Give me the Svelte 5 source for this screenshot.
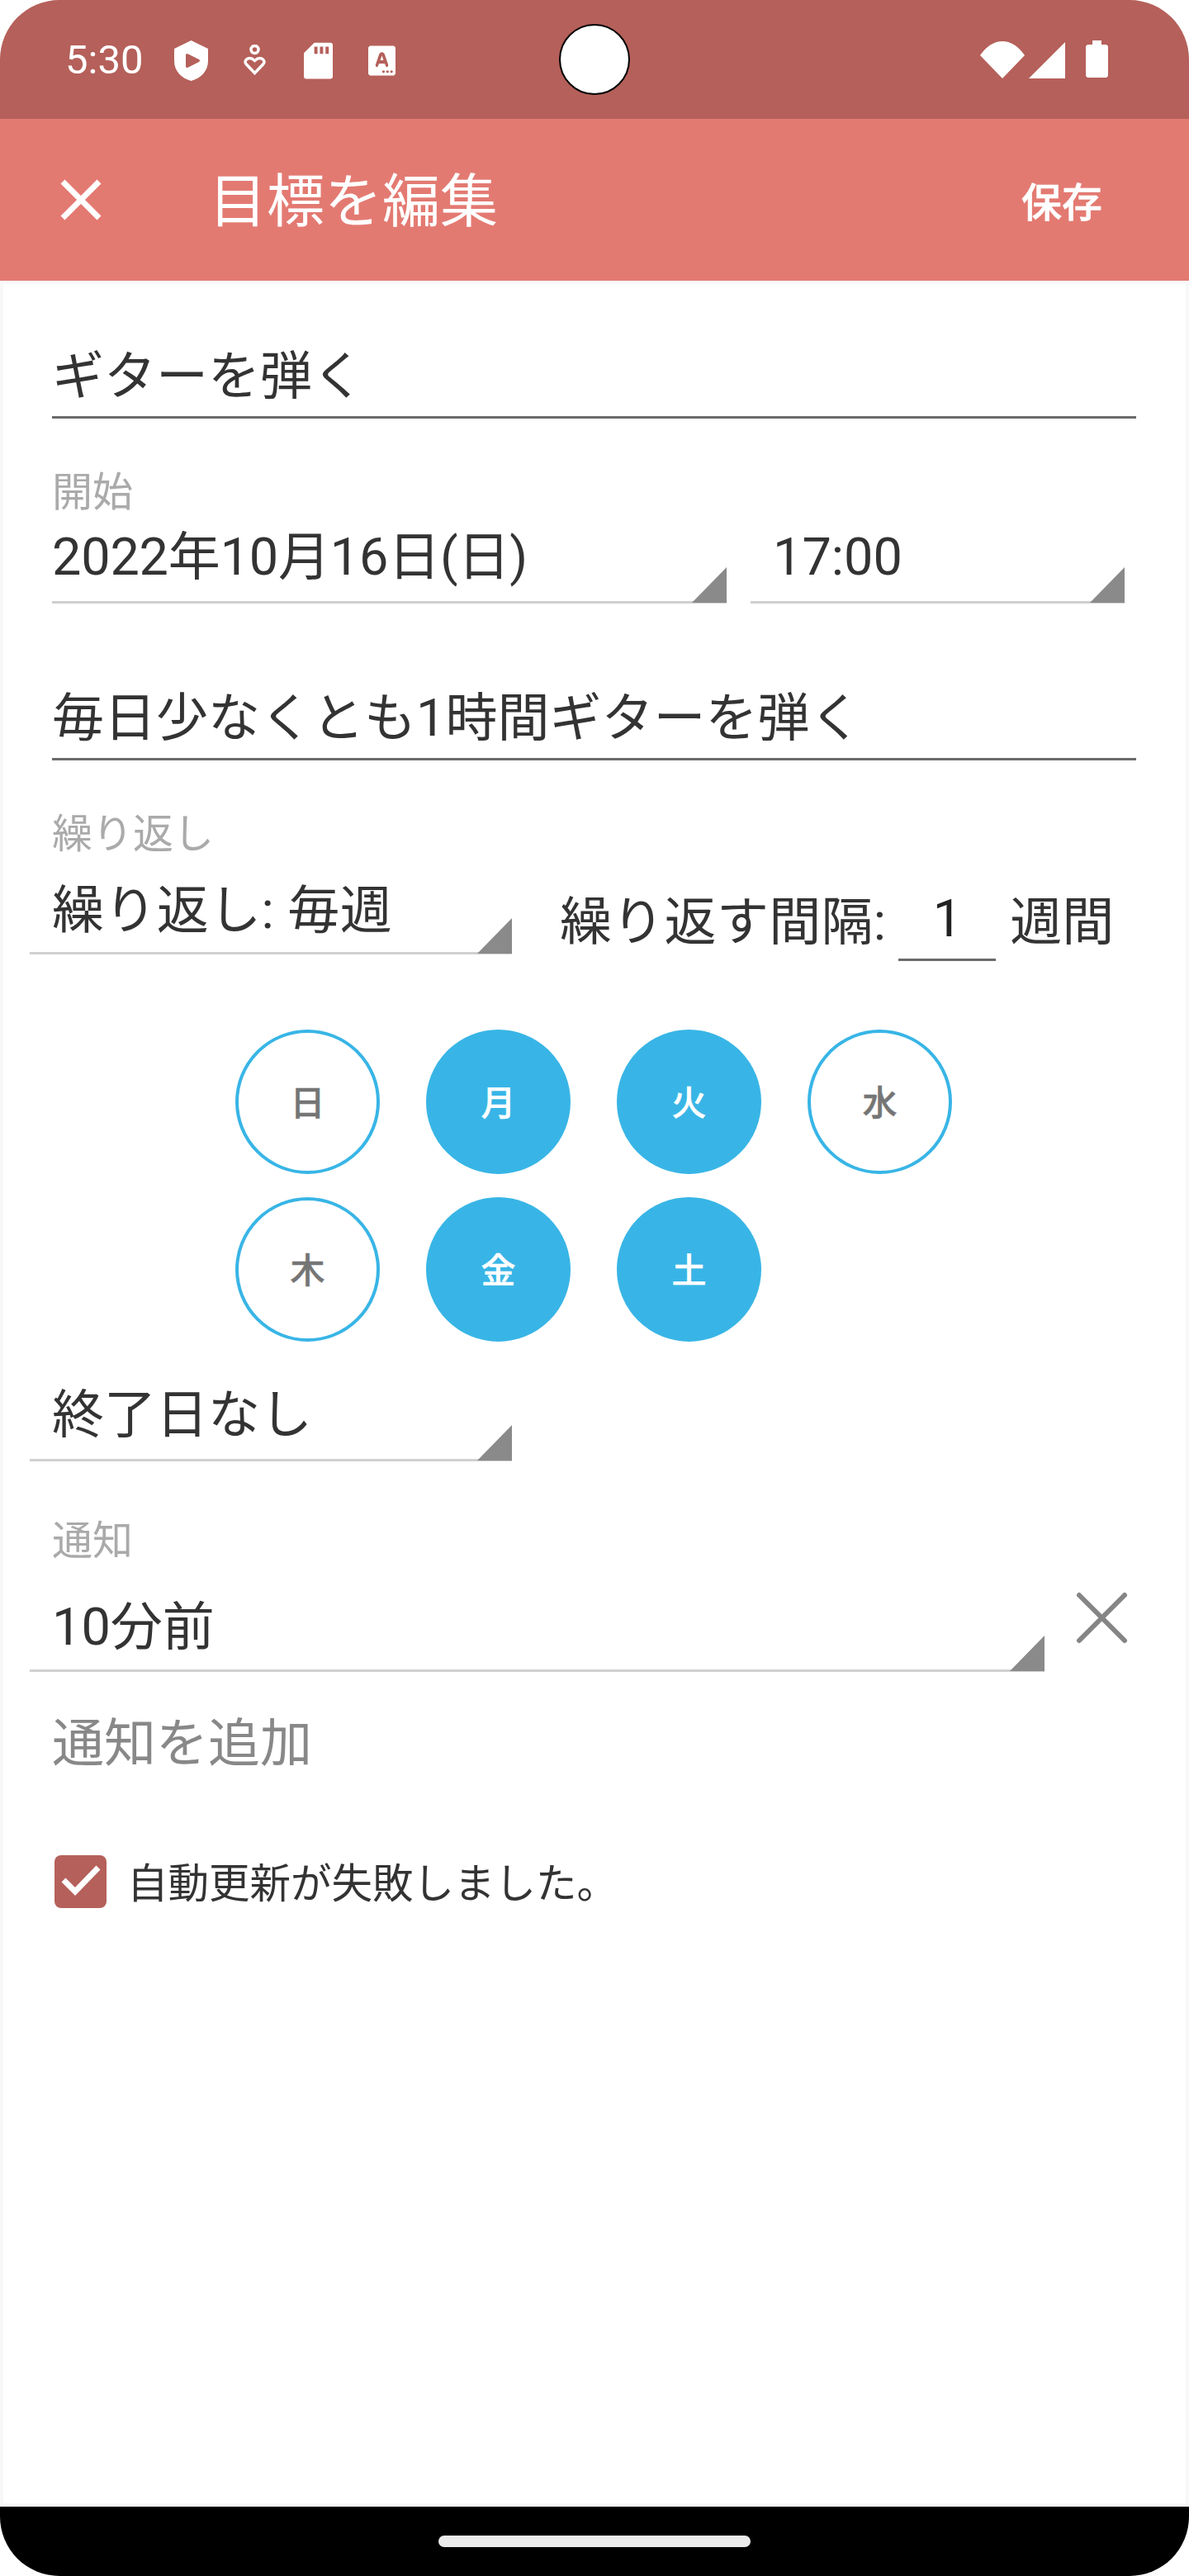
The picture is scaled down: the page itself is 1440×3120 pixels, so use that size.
<script>
  const days = [
    { t: '日', on: false }, { t: '月', on: true }, { t: '火', on: true }, { t: '水', on: false },
    { t: '木', on: false }, { t: '金', on: true }, { t: '土', on: true }
  ];
</script>

<div class="phone">
  <div class="status">
    <span class="time">5:30</span>
    <svg class="i-shield" viewBox="0 0 41 49"><path fill-rule="evenodd" d="M20.5 0L41 10V25C41 37 32 46 20.5 49C9 46 0 37 0 25V10ZM14 18V31Q14 34 17 32.500L30 26Q32 24.500 30 23L17 16.500Q14 15 14 18Z" fill="#fff"/></svg>
    <svg class="i-heart" viewBox="0 0 27 38"><g fill="none" stroke="#fff" stroke-width="3.5"><circle cx="13.5" cy="6" r="4.500"/><path d="M13.500 34.500L3.500 24Q0.500 20.500 3.500 18Q8 14.500 13.500 19.500Q19 14.500 23.500 18Q26.500 20.500 23.500 24Z"/></g></svg>
    <svg class="i-sd" viewBox="0 0 36 45"><path fill-rule="evenodd" d="M13 0H33Q36 0 36 3V42Q36 45 33 45H3Q0 45 0 42V13ZM13 5V14H17V5ZM20 5V14H24V5ZM27 5V14H31V5Z" fill="#fff"/></svg>
    <svg class="i-a" viewBox="0 0 34 37"><path fill-rule="evenodd" d="M2 0H32L34 2V35L32 37H2L0 35V2ZM17 8Q14 8 13 12L9 24Q9 27 11.500 26.500L13.500 22H20.500L22.500 26.500Q25 27 25 24L21 12Q20 8 17 8ZM15 18L17 12L19 18ZM19 30.500a1.700 1.700 0 1 0 .01 0ZM24 30.500a1.700 1.700 0 1 0 .01 0ZM29 30.500a1.700 1.700 0 1 0 .01 0Z" fill="#fff"/></svg>
    <span class="spacer"></span>
    <svg class="i-wifi" viewBox="0 0 54 45"><path d="M0 17Q12 0 27 0Q42 0 54 17L27 45Z" fill="#fff"/></svg>
    <svg class="i-signal" viewBox="0 0 44 44"><path d="M44 0V44H0Z" fill="#fff"/></svg>
    <svg class="i-batt" viewBox="0 0 27 45"><path d="M8 0H19V5H25L27 7V43L25 45H2L0 43V7L2 5H8Z" fill="#fff"/></svg>
  </div>
  <div class="cutout"></div>

  <header class="appbar">
    <svg class="close" viewBox="0 0 50 50"><path d="M3 3L47 47M47 3L3 47" stroke="#fff" stroke-width="7" fill="none"/></svg>
    <h1>目標を編集</h1>
    <span class="save">保存</span>
  </header>

  <main class="body">
    <div class="field title">ギターを弾く</div>

    <div class="label l-start">開始</div>
    <div class="date-row">
      <div class="spin date">2022年10月16日(日)<i class="tri"></i></div>
      <div class="spin clock">17:00<i class="tri"></i></div>
    </div>

    <div class="field desc">毎日少なくとも1時間ギターを弾く</div>

    <div class="label l-repeat">繰り返し</div>
    <div class="repeat-row">
      <div class="spin repeat">繰り返し: 毎週<i class="tri"></i></div>
      <div class="interval">
        <span class="gap-text">繰り返す間隔:</span>
        <span class="num">1</span>
        <span>週間</span>
      </div>
    </div>

    <div class="days">
      {#each days as d}
        <div class="day" class:on={d.on}>{d.t}</div>
      {/each}
    </div>

    <div class="spin end">終了日なし<i class="tri"></i></div>

    <div class="label l-notify">通知</div>
    <div class="notify-row">
      <div class="spin notify">10分前<i class="tri"></i></div>
      <svg class="remove" viewBox="0 0 63 63"><path d="M4 4L59 59M59 4L4 59" stroke="#858585" stroke-width="6" stroke-linecap="round" fill="none"/></svg>
    </div>

    <div class="add">通知を追加</div>

    <div class="check-row">
      <svg class="check" viewBox="0 0 63 64"><rect width="63" height="64" rx="8" fill="#b5605a"/><path d="M11 30L25 44L53 15" stroke="#fff" stroke-width="7" fill="none"/></svg>
      <span>自動更新が失敗しました。</span>
    </div>
  </main>

  <footer class="nav"><div class="pill"></div></footer>
</div>

<style>
  :global(body) { margin: 0; background: #fff; }
  .phone {
    position: relative; width: 1440px; height: 3120px; overflow: hidden;
    border-radius: 72px; display: flex; flex-direction: column; background: #fff;
    font-family: Roboto, "Noto Sans CJK JP", sans-serif; color: #333; font-size: 63px;
  }
  .status {
    height: 144px; flex: none; background: #b5605a; display: flex; align-items: flex-start; color: #fff;
    box-sizing: border-box;
  }
  .time { font-size: 49px; line-height: 50px; margin: 48px 0 0 79px; width: 132px; }
  .status svg { display: block; flex: none; }
  .i-shield { width: 41px; height: 49px; margin-top: 49px; }
  .i-heart { width: 27px; height: 38px; margin: 54px 0 0 43px; }
  .i-sd { width: 35px; height: 45px; margin: 51px 0 0 46px; }
  .i-a { width: 33px; height: 37px; margin: 55px 0 0 43px; }
  .spacer { flex: 1; }
  .i-wifi { width: 54px; height: 45px; margin-top: 50px; }
  .i-signal { width: 44px; height: 44px; margin: 51px 0 0 5px; }
  .i-batt { width: 27px; height: 45px; margin: 49px 98px 0 25px; }
  .cutout {
    position: absolute; left: 677px; top: 29px; width: 86px; height: 86px; box-sizing: border-box;
    border-radius: 50%; background: #fff; border: 2px solid #000;
  }
  .appbar {
    height: 196px; flex: none; background: #e37a72; display: flex; align-items: center; color: #fff;
  }
  .close { width: 50px; height: 50px; margin-left: 73px; flex: none; }
  .appbar h1 { margin: 6px 0 0 130px; font-size: 70px; font-weight: 400; line-height: 1; flex: 1; }
  .save { font-size: 49px; font-weight: 500; -webkit-text-stroke: 0.6px #fff; margin: 0 105px 2px 0; }
  .body { flex: 1; box-shadow: inset 0 0 0 4px #f8f8f8; min-height: 0; }
  .field {
    margin-left: 63px; margin-right: 64px; line-height: 84px; padding-bottom: 6px; border-bottom: 3px solid #6b6b6b;
  }
  .title { margin-top: 74px; }
  .desc { margin-top: 97px; }
  .label { margin-left: 63px; font-size: 49px; line-height: 56px; color: #aaa; }
  .l-start { margin-top: 62px; }
  .l-repeat { margin-top: 62px; }
  .l-notify { margin-top: 69px; }
  .spin {
    position: relative; line-height: 84px; padding-bottom: 9px; border-bottom: 3px solid #d0d0d0; box-sizing: border-box; height: 96px;
  }
  .tri {
    position: absolute; right: 0; bottom: -2px; width: 42px; height: 43px; background: #8a8a8a;
    clip-path: polygon(100% 0, 100% 100%, 0 100%);
  }
  .date-row { display: flex; margin: 10px 0 0 63px; }
  .date { width: 817px; line-height: 80px; letter-spacing: -0.2px; }
  .clock { width: 453px; margin-left: 29px; padding-left: 27px; line-height: 80px; }
  .repeat-row { display: flex; margin-top: 22px; margin-left: 36px; }
  .repeat { width: 584px; padding-left: 27px; height: 95px; letter-spacing: 0.4px; }
  .interval { display: flex; margin: 14px 0 0 58px; line-height: 84px; }
  .gap-text { letter-spacing: 0.3px; }
  .num {
    width: 118px; margin: 0 17px 0 15px; text-align: center; color: #222; height: 86px; border-bottom: 3px solid #6b6b6b;
    line-height: 76px;
  }
  .days {
    display: grid; grid-template-columns: repeat(4, 175px); gap: 28px 56px; margin: 83px 0 0 285px;
  }
  .day {
    width: 175px; height: 175px; box-sizing: border-box; border-radius: 50%; border: 4px solid #38b5e6; padding-bottom: 4px;
    display: flex; align-items: center; justify-content: center; font-size: 42px; font-weight: 500; -webkit-text-stroke: 0.5px currentColor; color: #757575;
  }
  .day.on { background: #38b5e6; color: #fff; }
  .end { margin: 47px 0 0 36px; width: 584px; padding-left: 27px; height: 98px; }
  .notify-row { display: flex; margin: 34px 0 0 36px; }
  .notify { width: 1229px; padding-left: 27px; }
  .remove { width: 63px; height: 63px; margin: -1px 0 0 38px; flex: none; }
  .add { margin: 45px 0 0 63px; line-height: 84px; color: #888; }
  .check-row { display: flex; align-items: flex-start; margin: 93px 0 0 66px; font-size: 49.5px; line-height: 70px; }
  .check { width: 63px; height: 64px; flex: none; margin-right: 25px; }
  .nav {
    height: 84px; flex: none; background: #000; display: flex; justify-content: center; align-items: flex-start;
  }
  .pill { width: 378px; height: 14px; margin-top: 35px; border-radius: 7px; background: #ebebeb; }
</style>
